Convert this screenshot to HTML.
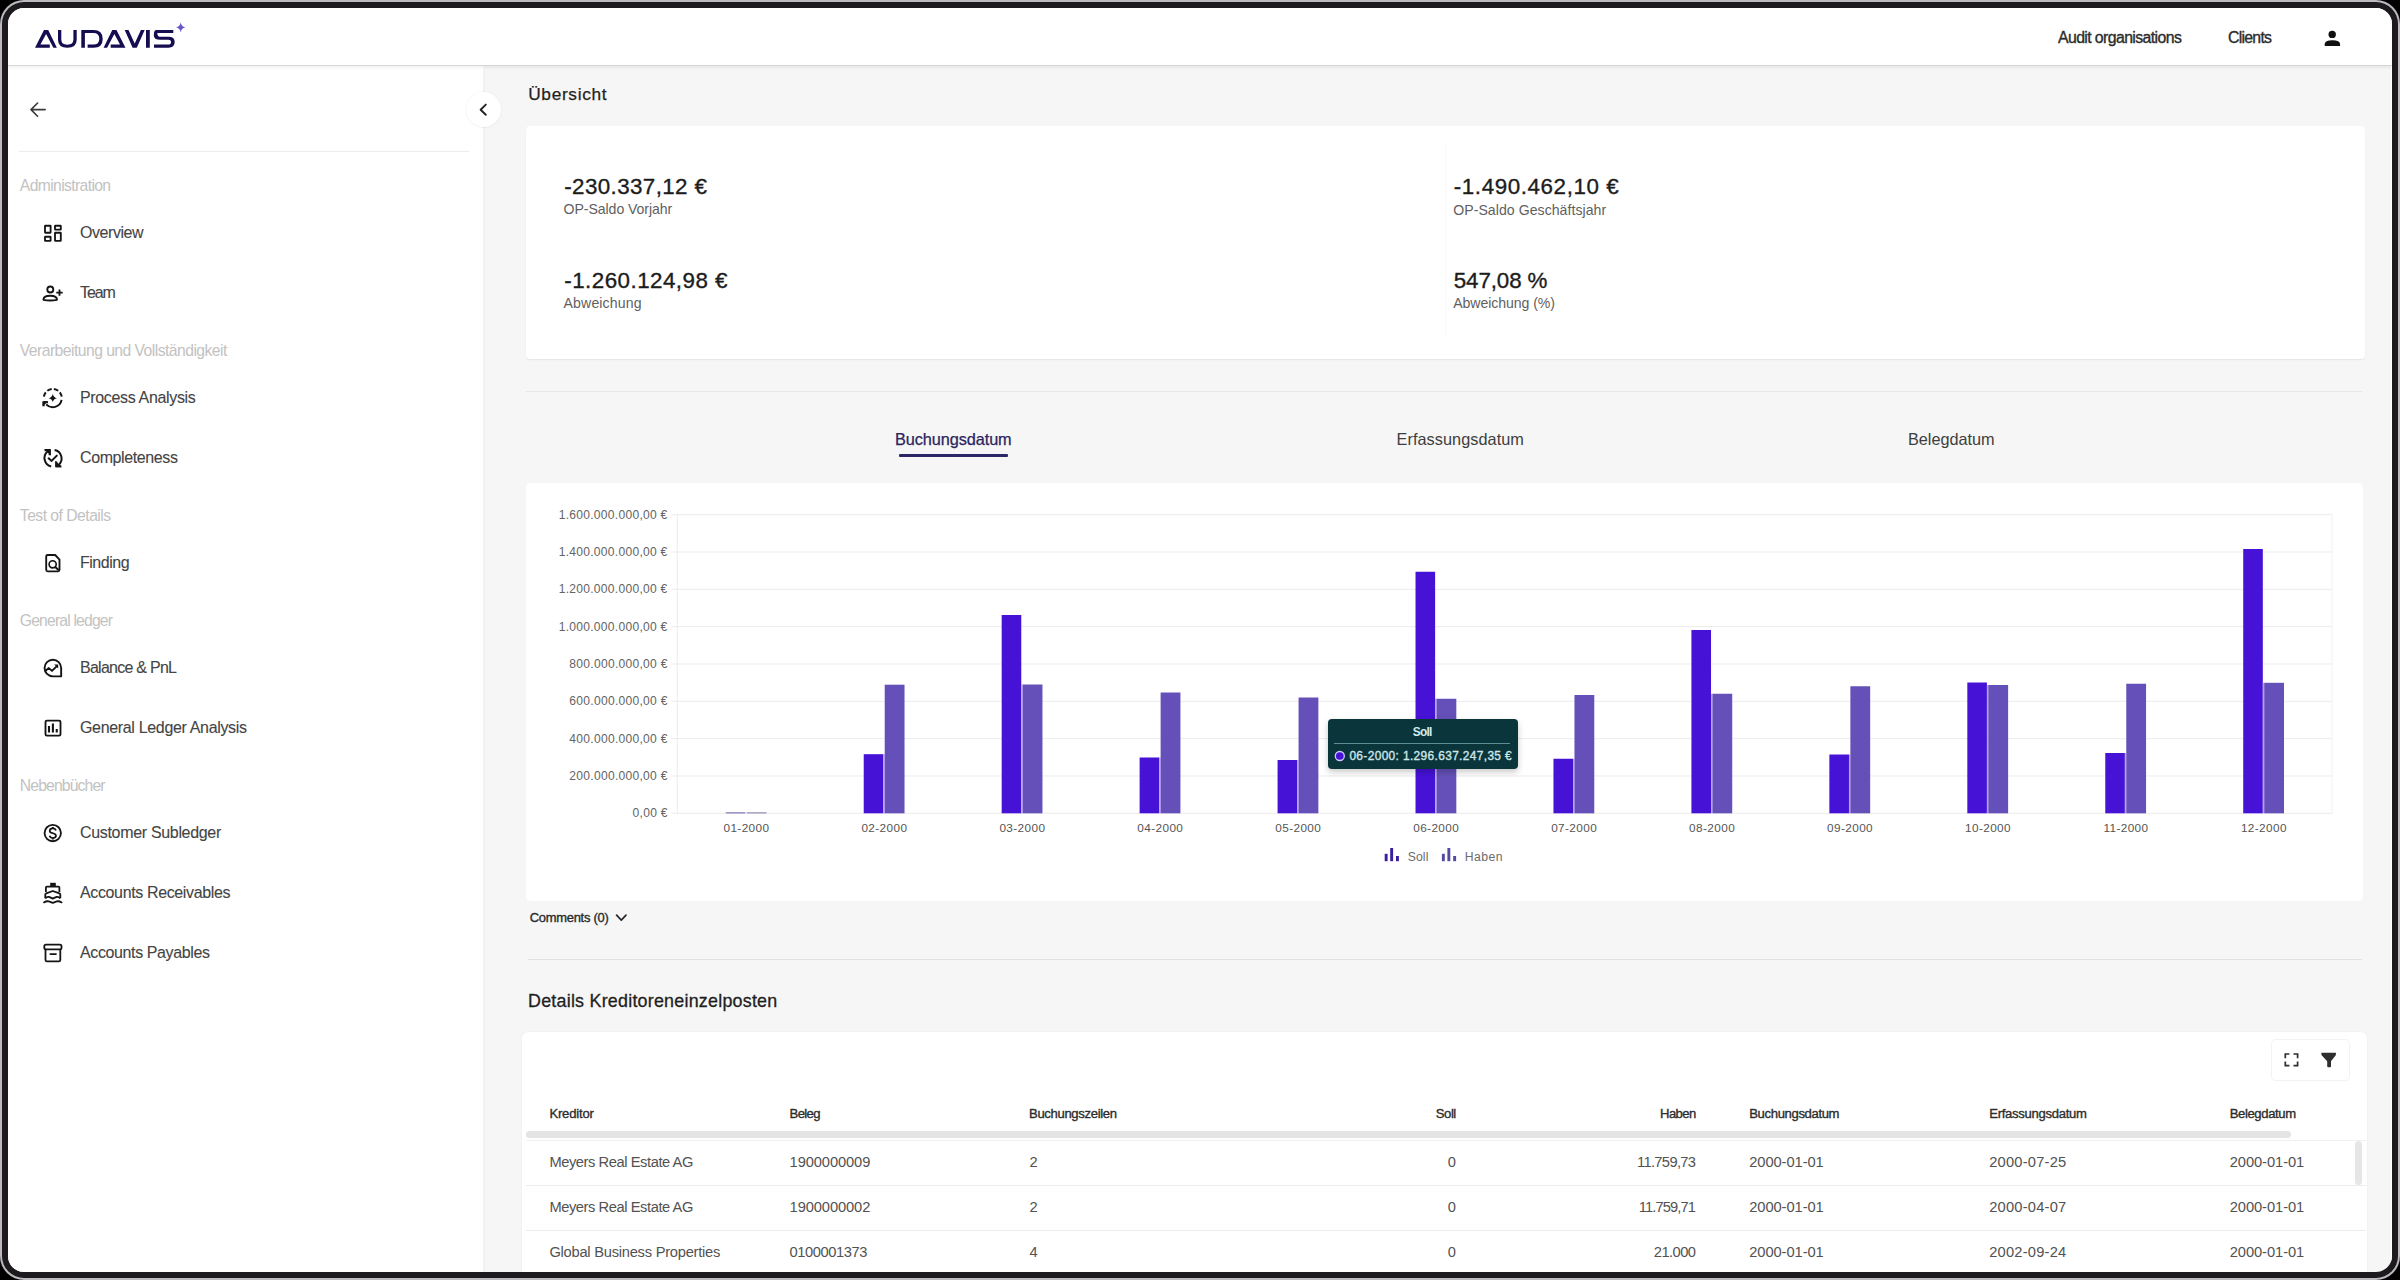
<!DOCTYPE html>
<html><head><meta charset="utf-8"><title>Audavis</title>
<style>
html,body{margin:0;padding:0;width:2400px;height:1280px;overflow:hidden;background:#000}
body{position:relative;font-family:"Liberation Sans",sans-serif}
.r{position:absolute}
.t{position:absolute;white-space:nowrap}
svg.r{overflow:visible}
</style></head><body>
<div class="r" style="left:0;top:0;width:2400px;height:1280px;border-radius:24px;background:#bcb8bc"></div>
<div class="r" style="left:2px;top:2px;width:2396px;height:1276px;border-radius:22px;background:#1c1a1e"></div>
<div class="r" style="left:8px;top:8px;width:2384px;height:1264px;border-radius:16px;background:#f6f6f6;overflow:hidden">
<div class="r" style="left:-8px;top:-8px;width:2400px;height:1280px">
<div class="r" style="left:0px;top:0px;width:2400px;height:64.5px;background:#fff"></div>
<div class="r" style="left:0px;top:64.5px;width:2400px;height:1.5px;background:#d6d6d6"></div>
<div class="r" style="left:0px;top:66px;width:2400px;height:4px;background:linear-gradient(rgba(0,0,0,0.06),rgba(0,0,0,0))"></div>
<div class="r" style="left:2391px;top:66px;width:1px;height:1214px;background:#fff"></div>
<svg class="r" style="left:0;top:0" width="200" height="60" viewBox="0 0 200 60">
<g fill="#140d4f">
<path d="M35.00 47.70 L44.00 30.00 L48.20 30.00 L56.87 47.70 L53.37 47.70 L46.10 33.90 L40.44 44.40 L49.80 44.40 L49.80 47.70 Z"/>
<path d="M58 30 H61.3 V39.5 Q61.3 44.7 67.3 44.7 Q73.4 44.7 73.4 39.5 V30 H76.7 V39.8 Q76.7 47.8 67.3 47.8 Q58 47.8 58 39.8 Z"/>
<path d="M81.3 30 H93.5 Q102.7 30 102.7 38.9 Q102.7 47.7 93.5 47.7 H87.6 V44.6 H93.3 Q99.3 44.6 99.3 38.9 Q99.3 33.1 93.3 33.1 H84.9 V47.7 H81.3 Z"/>
<path d="M125.47 47.70 L116.47 30.00 L112.27 30.00 L103.60 47.70 L107.10 47.70 L114.37 33.90 L120.03 44.40 L110.67 44.40 L110.67 47.70 Z"/>
<path d="M124.7 30 H128.5 L134.7 43.4 L140.9 30 H144.7 L136.8 47.7 H132.6 Z"/>
<path d="M146 30 H149.8 V47.7 H146 Z"/>
<path d="M156.5 30 H173.3 V33.1 H157.3 Q157.3 36.7 160 36.7 H168.5 Q174.7 36.7 174.7 42.1 Q174.7 47.7 168.5 47.7 H154 V44.6 H168.3 Q171 44.6 171 42.2 Q171 39.8 168.3 39.8 H160 Q153.8 39.8 153.8 35.2 Q153.8 30 156.5 30 Z"/>
</g>
<path fill="#6657c8" d="M180.7 22.2 Q181.3 26.7 185.3 27.4 Q181.3 28.1 180.7 32.4 Q180.1 28.1 176.1 27.4 Q180.1 26.7 180.7 22.2 Z"/>
</svg>
<div class="t" style="left:2058.00px;top:30.00px;font-size:15.84px;line-height:15.84px;color:#2b2b2b;font-weight:400;letter-spacing:-0.600px;-webkit-text-stroke:0.35px #2b2b2b;">Audit organisations</div>
<div class="t" style="left:2228.00px;top:30.00px;font-size:15.84px;line-height:15.84px;color:#2b2b2b;font-weight:400;letter-spacing:-0.733px;-webkit-text-stroke:0.35px #2b2b2b;">Clients</div>
<svg class="r" style="left:2316px;top:24px" width="32" height="28" viewBox="2316 24 32 28">
<circle cx="2332.2" cy="34.4" r="3.7" fill="#111"/>
<path d="M2324.7 45.9 V44 Q2324.7 40.2 2332.4 40.2 Q2340.1 40.2 2340.1 44 V45.9 Z" fill="#111"/>
</svg>
<div class="r" style="left:0px;top:66px;width:483px;height:1214px;background:#fff"></div>
<div class="r" style="left:482.5px;top:70px;width:2.5px;height:1210px;background:#f1f1f1"></div>
<div class="r" style="left:0px;top:66px;width:483px;height:4px;background:linear-gradient(rgba(0,0,0,0.05),rgba(0,0,0,0))"></div>
<div class="r" style="left:19px;top:150.5px;width:450px;height:1px;background:#ececec"></div>
<svg class="r" style="left:0;top:0" width="520" height="1000" viewBox="0 0 520 1000">
<g fill="none" stroke="#3a3a3a" stroke-width="1.6" stroke-linecap="round" stroke-linejoin="round">
<path d="M45.2 109.6 H31.2 M37.6 103 L31 109.6 L37.6 116.2"/>
</g>
</svg>
<div class="r" style="left:465.5px;top:92px;width:35px;height:35px;border-radius:50%;background:#fff;box-shadow:0 0 0 1px rgba(0,0,0,0.025),0 1px 2px rgba(0,0,0,0.03)"></div>
<svg class="r" style="left:470px;top:96px" width="28" height="28" viewBox="470 96 28 28">
<path d="M485.8 104.6 L480.6 109.7 L485.8 114.8" fill="none" stroke="#222" stroke-width="1.9" stroke-linecap="round" stroke-linejoin="round"/>
</svg>
<div class="t" style="left:19.80px;top:178.00px;font-size:15.70px;line-height:15.70px;color:#c2c2c2;font-weight:400;letter-spacing:-0.623px;">Administration</div>
<div class="t" style="left:80.00px;top:225.00px;font-size:15.99px;line-height:15.99px;color:#454545;font-weight:400;letter-spacing:-0.429px;-webkit-text-stroke:0.1px #3a3a3a;">Overview</div>
<div class="t" style="left:80.00px;top:285.00px;font-size:15.99px;line-height:15.99px;color:#454545;font-weight:400;letter-spacing:-1.067px;-webkit-text-stroke:0.1px #3a3a3a;">Team</div>
<div class="t" style="left:19.80px;top:343.00px;font-size:15.70px;line-height:15.70px;color:#c2c2c2;font-weight:400;letter-spacing:-0.535px;">Verarbeitung und Vollständigkeit</div>
<div class="t" style="left:80.00px;top:390.00px;font-size:15.99px;line-height:15.99px;color:#454545;font-weight:400;letter-spacing:-0.337px;-webkit-text-stroke:0.1px #3a3a3a;">Process Analysis</div>
<div class="t" style="left:80.00px;top:450.00px;font-size:15.99px;line-height:15.99px;color:#454545;font-weight:400;letter-spacing:-0.382px;-webkit-text-stroke:0.1px #3a3a3a;">Completeness</div>
<div class="t" style="left:19.80px;top:508.00px;font-size:15.70px;line-height:15.70px;color:#c2c2c2;font-weight:400;letter-spacing:-0.511px;">Test of Details</div>
<div class="t" style="left:80.00px;top:555.00px;font-size:15.99px;line-height:15.99px;color:#454545;font-weight:400;letter-spacing:-0.483px;-webkit-text-stroke:0.1px #3a3a3a;">Finding</div>
<div class="t" style="left:19.80px;top:613.00px;font-size:15.70px;line-height:15.70px;color:#c2c2c2;font-weight:400;letter-spacing:-0.815px;">General ledger</div>
<div class="t" style="left:80.00px;top:660.00px;font-size:15.99px;line-height:15.99px;color:#454545;font-weight:400;letter-spacing:-0.733px;-webkit-text-stroke:0.1px #3a3a3a;">Balance &amp; PnL</div>
<div class="t" style="left:80.00px;top:720.00px;font-size:15.99px;line-height:15.99px;color:#454545;font-weight:400;letter-spacing:-0.327px;-webkit-text-stroke:0.1px #3a3a3a;">General Ledger Analysis</div>
<div class="t" style="left:19.80px;top:778.00px;font-size:15.70px;line-height:15.70px;color:#c2c2c2;font-weight:400;letter-spacing:-0.850px;">Nebenbücher</div>
<div class="t" style="left:80.00px;top:825.00px;font-size:15.99px;line-height:15.99px;color:#454545;font-weight:400;letter-spacing:-0.315px;-webkit-text-stroke:0.1px #3a3a3a;">Customer Subledger</div>
<div class="t" style="left:80.00px;top:885.00px;font-size:15.99px;line-height:15.99px;color:#454545;font-weight:400;letter-spacing:-0.358px;-webkit-text-stroke:0.1px #3a3a3a;">Accounts Receivables</div>
<div class="t" style="left:80.00px;top:945.00px;font-size:15.99px;line-height:15.99px;color:#454545;font-weight:400;letter-spacing:-0.375px;-webkit-text-stroke:0.1px #3a3a3a;">Accounts Payables</div>
<svg class="r" style="left:0;top:0" width="100" height="1000" viewBox="0 0 100 1000">
<g fill="none" stroke="#141414" stroke-width="1.85" stroke-linejoin="round">
<!-- overview -->
<rect x="45" y="225.7" width="5.6" height="7" rx="0.4"/>
<rect x="55" y="225.7" width="5.8" height="3.9" rx="0.4"/>
<rect x="45" y="236.7" width="5.6" height="4.1" rx="0.4"/>
<rect x="55" y="232.7" width="5.8" height="8.1" rx="0.4"/>
<!-- team -->
<circle cx="50.3" cy="289.5" r="3"/>
<path d="M43.4 299.8 Q43.4 295.7 50.2 295.7 Q57 295.7 57 299.8 Q50.2 301.1 43.4 299.8 Z"/>
<path d="M56.3 292.6 H62.7 M59.5 289.4 V295.8"/>
<!-- process analysis -->
<path d="M43.9 396.6 A9 9 0 0 1 61.7 396.6" stroke-width="2" stroke-dasharray="4.7 2.2"/>
<path d="M61.6 399.9 A9 9 0 0 1 46.2 404.4" stroke-width="2"/>
<path d="M48 402.2 H43.6 V406.3" stroke-width="2.1"/>
<!-- completeness -->
<path d="M51.2 466.4 A8.6 8.6 0 0 1 47.6 451.4" stroke-width="2"/>
<path d="M44.6 450.1 H49.7 V455.2" stroke-width="2.1"/>
<path d="M54.6 450 A8.6 8.6 0 0 1 58.5 465" stroke-width="2"/>
<path d="M61.3 466.2 H56.3 V461.5" stroke-width="2.1"/>
<path d="M48.6 458.3 L51.6 460.9 L56.8 455.6" stroke-width="2" stroke-linecap="round"/>
<!-- finding -->
<path d="M47.7 555 H55.2 L59.5 559.6 V569.8 Q59.5 571.3 58 571.3 H47.7 Q46.2 571.3 46.2 569.8 V556.5 Q46.2 555 47.7 555 Z"/>
<circle cx="52.65" cy="564.3" r="3.55" stroke-width="1.65"/>
<path d="M55.2 566.9 L58.6 570" stroke-width="2"/>
<!-- balance -->
<path d="M61.15 668.05 A8.3 8.3 0 1 0 52.85 676.35 H61.15 Z" stroke-width="1.9"/>
<path d="M45.6 670.8 L48.8 668.1 L52 670.9 L56.9 666.1" stroke-width="1.9"/>
<!-- GL analysis -->
<rect x="45.5" y="720.6" width="15" height="15.1" rx="1.4"/>
<path d="M49 726.1 V732.6 M52.9 723.5 V732.6 M56.75 729.1 V732.6" stroke-width="2.1"/>
<!-- customer subledger -->
<circle cx="52.75" cy="833.05" r="8.2" stroke-width="1.8"/>
<path d="M55.9 830.4 C55.5 829.1 54.3 828.4 52.8 828.4 C50.9 828.4 49.7 829.4 49.7 830.9 C49.7 832.6 51.4 832.9 52.8 833.2 C54.4 833.6 56 834.1 56 835.8 C56 837.3 54.6 838 52.8 838 C51.2 838 50 837.2 49.5 835.8" stroke-width="1.7"/>
<path d="M52.8 826.9 V828.5 M52.8 837.9 V839.6" stroke-width="2"/>
<!-- AR boat -->
<path d="M45.9 892 V887.6 Q45.9 886.6 46.9 886.6 H58.4 Q59.4 886.6 59.4 887.6 V892" stroke-width="1.8"/>
<path d="M45.3 898.2 V894.6 Q45.3 893.7 46.2 893.4 L52.8 891 L59.4 893.4 Q60.3 893.7 60.3 894.6 V898.2" stroke-width="1.8"/>
<path d="M45.3 898.3 Q47 896.4 48.8 896.9 Q50.8 897.6 52.8 898.6 Q54.8 897.6 56.8 896.9 Q58.6 896.4 60.3 898.3" stroke-width="1.8"/>
<path d="M44 902.4 Q46.4 900.9 48.8 901.4 Q50.8 902.1 52.8 902.8 Q54.8 902.1 56.8 901.4 Q59.2 900.9 61.6 902.4" stroke-width="1.8" stroke-linecap="round"/>
<!-- AP archive -->
<rect x="44.3" y="944.7" width="17.2" height="4.6" rx="1.6" stroke-width="1.8"/>
<path d="M45.5 949.3 V959.9 Q45.5 961.4 47 961.4 H58.8 Q60.3 961.4 60.3 959.9 V949.3" stroke-width="1.8"/>
<path d="M50.4 954.1 H55.9" stroke-width="1.9" stroke-linecap="round"/>
</g>
<g fill="#141414">
<path d="M52.76 394 Q53.5 397.5 56.9 398.2 Q53.5 398.9 52.76 402 Q52 398.9 48.6 398.2 Q52 397.5 52.76 394 Z"/>
<path d="M42.6 401.2 H48 L42.6 406.6 Z"/>
<path d="M44.2 449.1 H50.7 V455.6 Z"/>
<path d="M61.8 467.2 H55.3 V460.7 Z"/>
<path d="M54.2 664.5 H58.2 V668.5 Z"/>
<path d="M50.2 882.8 H55.8 V886.2 H50.2 Z"/>
</g>
</svg>
<div class="t" style="left:528.20px;top:86.00px;font-size:17.30px;line-height:17.30px;color:#1f1f1f;font-weight:400;letter-spacing:0.675px;-webkit-text-stroke:0.25px #1f1f1f;">Übersicht</div>
<div class="r" style="left:525.5px;top:126px;width:1839px;height:232.5px;background:#fff;border-radius:4px;box-shadow:0 1px 1.5px rgba(0,0,0,0.07)"></div>
<div class="r" style="left:1445px;top:145px;width:1px;height:190px;background:#f8f8f8"></div>
<div class="t" style="left:564.30px;top:176.00px;font-size:22.38px;line-height:22.38px;color:#1c1c1c;font-weight:400;letter-spacing:0.375px;-webkit-text-stroke:0.35px #1c1c1c;">-230.337,12 €</div>
<div class="t" style="left:563.60px;top:202.00px;font-size:14.10px;line-height:14.10px;color:#5f5f5f;font-weight:400;letter-spacing:-0.067px;">OP-Saldo Vorjahr</div>
<div class="t" style="left:564.30px;top:270.00px;font-size:22.38px;line-height:22.38px;color:#1c1c1c;font-weight:400;letter-spacing:0.457px;-webkit-text-stroke:0.35px #1c1c1c;">-1.260.124,98 €</div>
<div class="t" style="left:563.60px;top:296.00px;font-size:14.10px;line-height:14.10px;color:#5f5f5f;font-weight:400;letter-spacing:0.122px;">Abweichung</div>
<div class="t" style="left:1453.80px;top:176.00px;font-size:22.38px;line-height:22.38px;color:#1c1c1c;font-weight:400;letter-spacing:0.586px;-webkit-text-stroke:0.35px #1c1c1c;">-1.490.462,10 €</div>
<div class="t" style="left:1453.20px;top:203.00px;font-size:14.10px;line-height:14.10px;color:#5f5f5f;font-weight:400;letter-spacing:0.048px;">OP-Saldo Geschäftsjahr</div>
<div class="t" style="left:1453.80px;top:270.00px;font-size:22.38px;line-height:22.38px;color:#1c1c1c;font-weight:400;letter-spacing:-0.129px;-webkit-text-stroke:0.35px #1c1c1c;">547,08 %</div>
<div class="t" style="left:1453.20px;top:296.00px;font-size:14.10px;line-height:14.10px;color:#5f5f5f;font-weight:400;letter-spacing:-0.069px;">Abweichung (%)</div>
<div class="r" style="left:526px;top:390.5px;width:1836px;height:1.2px;background:#e6e6e6"></div>
<div class="t" style="left:895.00px;top:431.00px;font-size:16.28px;line-height:16.28px;color:#2a2560;font-weight:400;letter-spacing:-0.075px;-webkit-text-stroke:0.25px #2a2560;">Buchungsdatum</div>
<div class="r" style="left:899px;top:454px;width:109px;height:2.8px;background:#2c2766;border-radius:1px"></div>
<div class="t" style="left:1396.50px;top:431.00px;font-size:16.28px;line-height:16.28px;color:#3e3e3e;font-weight:400;letter-spacing:0.057px;">Erfassungsdatum</div>
<div class="t" style="left:1908.00px;top:431.00px;font-size:16.28px;line-height:16.28px;color:#3e3e3e;font-weight:400;letter-spacing:-0.022px;">Belegdatum</div>
<div class="r" style="left:526px;top:483px;width:1836.5px;height:418px;background:#fff;border-radius:5px"></div>
<svg class="r" style="left:0;top:0" width="2400" height="1280" viewBox="0 0 2400 1280">
<rect x="671.5" y="812.80" width="1660.80" height="1" fill="#ececec"/>
<rect x="671.5" y="775.47" width="1660.80" height="1" fill="#ececec"/>
<rect x="671.5" y="738.14" width="1660.80" height="1" fill="#ececec"/>
<rect x="671.5" y="700.81" width="1660.80" height="1" fill="#ececec"/>
<rect x="671.5" y="663.48" width="1660.80" height="1" fill="#ececec"/>
<rect x="671.5" y="626.15" width="1660.80" height="1" fill="#ececec"/>
<rect x="671.5" y="588.82" width="1660.80" height="1" fill="#ececec"/>
<rect x="671.5" y="551.49" width="1660.80" height="1" fill="#ececec"/>
<rect x="671.5" y="514.16" width="1660.80" height="1" fill="#ececec"/>
<rect x="676.8" y="514.2" width="1" height="299.6" fill="#ececec"/>
<rect x="2331.5" y="514.2" width="1" height="299.6" fill="#f1f1f1"/>
<rect x="725.77" y="812.2" width="19.6" height="1.3" fill="#8a80c0"/>
<rect x="746.77" y="812.2" width="19.8" height="1.3" fill="#9a94b8"/>
<rect x="863.72" y="754.20" width="19.6" height="59.10" fill="#4612d6"/>
<rect x="883.32" y="754.20" width="1.4" height="59.10" fill="#b49cfa"/>
<rect x="884.72" y="684.70" width="19.8" height="128.60" fill="#6450b8"/>
<rect x="1001.67" y="615.00" width="19.6" height="198.30" fill="#4612d6"/>
<rect x="1021.27" y="684.50" width="1.4" height="128.80" fill="#b49cfa"/>
<rect x="1022.67" y="684.50" width="19.8" height="128.80" fill="#6450b8"/>
<rect x="1139.62" y="757.50" width="19.6" height="55.80" fill="#4612d6"/>
<rect x="1159.22" y="757.50" width="1.4" height="55.80" fill="#b49cfa"/>
<rect x="1160.62" y="692.50" width="19.8" height="120.80" fill="#6450b8"/>
<rect x="1277.57" y="760.00" width="19.6" height="53.30" fill="#4612d6"/>
<rect x="1297.17" y="760.00" width="1.4" height="53.30" fill="#b49cfa"/>
<rect x="1298.57" y="697.50" width="19.8" height="115.80" fill="#6450b8"/>
<rect x="1415.52" y="571.75" width="19.6" height="241.55" fill="#4612d6"/>
<rect x="1435.12" y="698.75" width="1.4" height="114.55" fill="#b49cfa"/>
<rect x="1436.52" y="698.75" width="19.8" height="114.55" fill="#6450b8"/>
<rect x="1553.47" y="758.75" width="19.6" height="54.55" fill="#4612d6"/>
<rect x="1573.07" y="758.75" width="1.4" height="54.55" fill="#b49cfa"/>
<rect x="1574.47" y="695.00" width="19.8" height="118.30" fill="#6450b8"/>
<rect x="1691.42" y="630.00" width="19.6" height="183.30" fill="#4612d6"/>
<rect x="1711.02" y="693.75" width="1.4" height="119.55" fill="#b49cfa"/>
<rect x="1712.42" y="693.75" width="19.8" height="119.55" fill="#6450b8"/>
<rect x="1829.37" y="754.50" width="19.6" height="58.80" fill="#4612d6"/>
<rect x="1848.97" y="754.50" width="1.4" height="58.80" fill="#b49cfa"/>
<rect x="1850.37" y="686.25" width="19.8" height="127.05" fill="#6450b8"/>
<rect x="1967.32" y="682.50" width="19.6" height="130.80" fill="#4612d6"/>
<rect x="1986.92" y="685.00" width="1.4" height="128.30" fill="#b49cfa"/>
<rect x="1988.32" y="685.00" width="19.8" height="128.30" fill="#6450b8"/>
<rect x="2105.27" y="753.00" width="19.6" height="60.30" fill="#4612d6"/>
<rect x="2124.87" y="753.00" width="1.4" height="60.30" fill="#b49cfa"/>
<rect x="2126.27" y="683.75" width="19.8" height="129.55" fill="#6450b8"/>
<rect x="2243.22" y="549.00" width="19.6" height="264.30" fill="#4612d6"/>
<rect x="2262.82" y="682.80" width="1.4" height="130.50" fill="#b49cfa"/>
<rect x="2264.22" y="682.80" width="19.8" height="130.50" fill="#6450b8"/>
<rect x="1384.70" y="853.8" width="2.9" height="7.4" fill="#3a1fa0"/>
<rect x="1390.20" y="848" width="2.9" height="13.2" fill="#3a1fa0"/>
<rect x="1396.00" y="856" width="2.9" height="5.2" fill="#3a1fa0"/>
<rect x="1441.90" y="853.8" width="2.9" height="7.4" fill="#544a9e"/>
<rect x="1447.40" y="848" width="2.9" height="13.2" fill="#544a9e"/>
<rect x="1453.20" y="856" width="2.9" height="5.2" fill="#544a9e"/>
</svg>
<div class="t" style="left:632.59px;top:807.00px;font-size:12.06px;line-height:12.06px;color:#646464;font-weight:400;letter-spacing:0.282px;">0,00 €</div>
<div class="t" style="left:569.36px;top:770.00px;font-size:12.06px;line-height:12.06px;color:#646464;font-weight:400;letter-spacing:0.282px;">200.000.000,00 €</div>
<div class="t" style="left:569.36px;top:733.00px;font-size:12.06px;line-height:12.06px;color:#646464;font-weight:400;letter-spacing:0.282px;">400.000.000,00 €</div>
<div class="t" style="left:569.36px;top:695.00px;font-size:12.06px;line-height:12.06px;color:#646464;font-weight:400;letter-spacing:0.282px;">600.000.000,00 €</div>
<div class="t" style="left:569.36px;top:658.00px;font-size:12.06px;line-height:12.06px;color:#646464;font-weight:400;letter-spacing:0.282px;">800.000.000,00 €</div>
<div class="t" style="left:558.70px;top:621.00px;font-size:12.06px;line-height:12.06px;color:#646464;font-weight:400;letter-spacing:0.282px;">1.000.000.000,00 €</div>
<div class="t" style="left:558.70px;top:583.00px;font-size:12.06px;line-height:12.06px;color:#646464;font-weight:400;letter-spacing:0.282px;">1.200.000.000,00 €</div>
<div class="t" style="left:558.70px;top:546.00px;font-size:12.06px;line-height:12.06px;color:#646464;font-weight:400;letter-spacing:0.282px;">1.400.000.000,00 €</div>
<div class="t" style="left:558.70px;top:509.00px;font-size:12.06px;line-height:12.06px;color:#646464;font-weight:400;letter-spacing:0.282px;">1.600.000.000,00 €</div>
<div class="t" style="left:723.48px;top:822.00px;font-size:11.77px;line-height:11.77px;color:#555;font-weight:400;letter-spacing:0.400px;">01-2000</div>
<div class="t" style="left:861.42px;top:822.00px;font-size:11.77px;line-height:11.77px;color:#555;font-weight:400;letter-spacing:0.400px;">02-2000</div>
<div class="t" style="left:999.38px;top:822.00px;font-size:11.77px;line-height:11.77px;color:#555;font-weight:400;letter-spacing:0.400px;">03-2000</div>
<div class="t" style="left:1137.33px;top:822.00px;font-size:11.77px;line-height:11.77px;color:#555;font-weight:400;letter-spacing:0.400px;">04-2000</div>
<div class="t" style="left:1275.27px;top:822.00px;font-size:11.77px;line-height:11.77px;color:#555;font-weight:400;letter-spacing:0.400px;">05-2000</div>
<div class="t" style="left:1413.22px;top:822.00px;font-size:11.77px;line-height:11.77px;color:#555;font-weight:400;letter-spacing:0.400px;">06-2000</div>
<div class="t" style="left:1551.17px;top:822.00px;font-size:11.77px;line-height:11.77px;color:#555;font-weight:400;letter-spacing:0.400px;">07-2000</div>
<div class="t" style="left:1689.12px;top:822.00px;font-size:11.77px;line-height:11.77px;color:#555;font-weight:400;letter-spacing:0.400px;">08-2000</div>
<div class="t" style="left:1827.07px;top:822.00px;font-size:11.77px;line-height:11.77px;color:#555;font-weight:400;letter-spacing:0.400px;">09-2000</div>
<div class="t" style="left:1965.02px;top:822.00px;font-size:11.77px;line-height:11.77px;color:#555;font-weight:400;letter-spacing:0.400px;">10-2000</div>
<div class="t" style="left:2103.42px;top:822.00px;font-size:11.77px;line-height:11.77px;color:#555;font-weight:400;letter-spacing:0.400px;">11-2000</div>
<div class="t" style="left:2240.92px;top:822.00px;font-size:11.77px;line-height:11.77px;color:#555;font-weight:400;letter-spacing:0.400px;">12-2000</div>
<div class="t" style="left:1407.80px;top:851.00px;font-size:12.21px;line-height:12.21px;color:#6b6b6b;font-weight:400;letter-spacing:0.067px;">Soll</div>
<div class="t" style="left:1464.70px;top:851.00px;font-size:12.21px;line-height:12.21px;color:#6b6b6b;font-weight:400;letter-spacing:0.450px;">Haben</div>
<div class="r" style="left:1327.9px;top:718.6px;width:189.9px;height:50.2px;border-radius:4px;background:#0a353b;box-shadow:0 3px 6px rgba(0,0,0,0.22)"></div>
<div class="r" style="left:1334.3px;top:743px;width:176.2px;height:1px;background:#5b8d92"></div>
<svg class="r" style="left:1330px;top:746px" width="20" height="20" viewBox="1330 746 20 20"><circle cx="1339.8" cy="756" r="4.5" fill="#4612d6" stroke="#d2c8ff" stroke-width="1.3"/></svg>
<div class="t" style="left:1412.75px;top:727.00px;font-size:11.92px;line-height:11.92px;color:#d3ecee;font-weight:700;letter-spacing:-0.717px;">Soll</div>
<div class="t" style="left:1349.40px;top:751.00px;font-size:11.92px;line-height:11.92px;color:#cfe6e8;font-weight:400;letter-spacing:0.358px;-webkit-text-stroke:0.35px #cfe6e8;">06-2000: 1.296.637.247,35 €</div>
<div class="t" style="left:529.70px;top:912.00px;font-size:12.94px;line-height:12.94px;color:#2a2a2a;font-weight:400;letter-spacing:-0.264px;-webkit-text-stroke:0.35px #2a2a2a;">Comments (0)</div>
<svg class="r" style="left:610px;top:908px" width="22" height="20" viewBox="610 908 22 20"><path d="M616.6 915.2 L621.3 920.2 L626 915.2" fill="none" stroke="#2a2a2a" stroke-width="1.7" stroke-linecap="round" stroke-linejoin="round"/></svg>
<div class="r" style="left:528px;top:958.7px;width:1834px;height:1.2px;background:#e2e2e2"></div>
<div class="t" style="left:528.00px;top:993.00px;font-size:17.88px;line-height:17.88px;color:#1f1f1f;font-weight:400;letter-spacing:0.241px;-webkit-text-stroke:0.3px #1f1f1f;">Details Kreditoreneinzelposten</div>
<div class="r" style="left:522px;top:1031.5px;width:1845px;height:300px;background:#fff;border-radius:6px;box-shadow:0 0 2px rgba(0,0,0,0.07)"></div>
<div class="r" style="left:2272.1px;top:1040.1px;width:77.3px;height:39.6px;border-radius:4px;background:#fff;box-shadow:0 0 0 1px #f3f3f3,0 1px 2px rgba(0,0,0,0.04)"></div>
<svg class="r" style="left:2270px;top:1040px" width="80" height="40" viewBox="2270 1040 80 40">
<path d="M2285.3 1058.2 V1054 H2289.4 M2293.5 1054 H2297.6 V1058.2 M2297.6 1061.4 V1065.6 H2293.5 M2289.4 1065.6 H2285.3 V1061.4" fill="none" stroke="#2e2e2e" stroke-width="1.7"/>
<path d="M2321.4 1052.7 H2335.9 V1055 L2331 1061.2 V1066.2 Q2331 1067.2 2330 1067.2 H2328.2 Q2327.2 1067.2 2327.2 1066.2 V1061.2 L2321.4 1055 Z" fill="#2e2e2e"/>
</svg>
<div class="t" style="left:549.40px;top:1107.00px;font-size:13.08px;line-height:13.08px;color:#2c2c2c;font-weight:400;letter-spacing:-0.186px;-webkit-text-stroke:0.35px #2c2c2c;">Kreditor</div>
<div class="t" style="left:789.60px;top:1107.00px;font-size:13.08px;line-height:13.08px;color:#2c2c2c;font-weight:400;letter-spacing:-0.650px;-webkit-text-stroke:0.35px #2c2c2c;">Beleg</div>
<div class="t" style="left:1029.00px;top:1107.00px;font-size:13.08px;line-height:13.08px;color:#2c2c2c;font-weight:400;letter-spacing:-0.331px;-webkit-text-stroke:0.35px #2c2c2c;">Buchungszeilen</div>
<div class="t" style="left:1435.80px;top:1107.00px;font-size:13.08px;line-height:13.08px;color:#2c2c2c;font-weight:400;letter-spacing:-0.450px;-webkit-text-stroke:0.35px #2c2c2c;">Soll</div>
<div class="t" style="left:1660.00px;top:1107.00px;font-size:13.08px;line-height:13.08px;color:#2c2c2c;font-weight:400;letter-spacing:-0.562px;-webkit-text-stroke:0.35px #2c2c2c;">Haben</div>
<div class="t" style="left:1749.25px;top:1107.00px;font-size:13.08px;line-height:13.08px;color:#2c2c2c;font-weight:400;letter-spacing:-0.354px;-webkit-text-stroke:0.35px #2c2c2c;">Buchungsdatum</div>
<div class="t" style="left:1989.25px;top:1107.00px;font-size:13.08px;line-height:13.08px;color:#2c2c2c;font-weight:400;letter-spacing:-0.289px;-webkit-text-stroke:0.35px #2c2c2c;">Erfassungsdatum</div>
<div class="t" style="left:2229.70px;top:1107.00px;font-size:13.08px;line-height:13.08px;color:#2c2c2c;font-weight:400;letter-spacing:-0.378px;-webkit-text-stroke:0.35px #2c2c2c;">Belegdatum</div>
<div class="r" style="left:526.4px;top:1131px;width:1764.2px;height:6.5px;background:#e4e4e4;border-radius:3.5px"></div>
<div class="r" style="left:526px;top:1140px;width:1840px;height:1px;background:#f1f1f1"></div>
<div class="r" style="left:526px;top:1185.1px;width:1840px;height:1px;background:#ececec"></div>
<div class="r" style="left:526px;top:1230.3px;width:1840px;height:1px;background:#ececec"></div>
<div class="r" style="left:2354.7px;top:1141px;width:7.1px;height:43.6px;background:#e6e6e6;border-radius:3.5px"></div>
<div class="t" style="left:549.40px;top:1155.00px;font-size:14.68px;line-height:14.68px;color:#525252;font-weight:400;letter-spacing:-0.425px;">Meyers Real Estate AG</div>
<div class="t" style="left:789.60px;top:1155.00px;font-size:14.68px;line-height:14.68px;color:#525252;font-weight:400;letter-spacing:-0.100px;">1900000009</div>
<div class="t" style="left:1029.50px;top:1155.00px;font-size:14.68px;line-height:14.68px;color:#525252;font-weight:400;letter-spacing:0.000px;">2</div>
<div class="t" style="left:1447.80px;top:1155.00px;font-size:14.68px;line-height:14.68px;color:#525252;font-weight:400;letter-spacing:0.000px;">0</div>
<div class="t" style="left:1637.00px;top:1155.00px;font-size:14.68px;line-height:14.68px;color:#525252;font-weight:400;letter-spacing:-0.650px;">11.759,73</div>
<div class="t" style="left:1749.25px;top:1155.00px;font-size:14.68px;line-height:14.68px;color:#525252;font-weight:400;letter-spacing:-0.067px;">2000-01-01</div>
<div class="t" style="left:1989.25px;top:1155.00px;font-size:14.68px;line-height:14.68px;color:#525252;font-weight:400;letter-spacing:0.211px;">2000-07-25</div>
<div class="t" style="left:2229.70px;top:1155.00px;font-size:14.68px;line-height:14.68px;color:#525252;font-weight:400;letter-spacing:-0.056px;">2000-01-01</div>
<div class="t" style="left:549.40px;top:1200.00px;font-size:14.68px;line-height:14.68px;color:#525252;font-weight:400;letter-spacing:-0.425px;">Meyers Real Estate AG</div>
<div class="t" style="left:789.60px;top:1200.00px;font-size:14.68px;line-height:14.68px;color:#525252;font-weight:400;letter-spacing:-0.100px;">1900000002</div>
<div class="t" style="left:1029.50px;top:1200.00px;font-size:14.68px;line-height:14.68px;color:#525252;font-weight:400;letter-spacing:0.000px;">2</div>
<div class="t" style="left:1447.80px;top:1200.00px;font-size:14.68px;line-height:14.68px;color:#525252;font-weight:400;letter-spacing:0.000px;">0</div>
<div class="t" style="left:1638.75px;top:1200.00px;font-size:14.68px;line-height:14.68px;color:#525252;font-weight:400;letter-spacing:-0.869px;">11.759,71</div>
<div class="t" style="left:1749.25px;top:1200.00px;font-size:14.68px;line-height:14.68px;color:#525252;font-weight:400;letter-spacing:-0.067px;">2000-01-01</div>
<div class="t" style="left:1989.25px;top:1200.00px;font-size:14.68px;line-height:14.68px;color:#525252;font-weight:400;letter-spacing:0.211px;">2000-04-07</div>
<div class="t" style="left:2229.70px;top:1200.00px;font-size:14.68px;line-height:14.68px;color:#525252;font-weight:400;letter-spacing:-0.056px;">2000-01-01</div>
<div class="t" style="left:549.40px;top:1245.00px;font-size:14.68px;line-height:14.68px;color:#525252;font-weight:400;letter-spacing:-0.240px;">Global Business Properties</div>
<div class="t" style="left:789.60px;top:1245.00px;font-size:14.68px;line-height:14.68px;color:#525252;font-weight:400;letter-spacing:-0.411px;">0100001373</div>
<div class="t" style="left:1029.50px;top:1245.00px;font-size:14.68px;line-height:14.68px;color:#525252;font-weight:400;letter-spacing:0.000px;">4</div>
<div class="t" style="left:1447.80px;top:1245.00px;font-size:14.68px;line-height:14.68px;color:#525252;font-weight:400;letter-spacing:0.000px;">0</div>
<div class="t" style="left:1653.75px;top:1245.00px;font-size:14.68px;line-height:14.68px;color:#525252;font-weight:400;letter-spacing:-0.530px;">21.000</div>
<div class="t" style="left:1749.25px;top:1245.00px;font-size:14.68px;line-height:14.68px;color:#525252;font-weight:400;letter-spacing:-0.067px;">2000-01-01</div>
<div class="t" style="left:1989.25px;top:1245.00px;font-size:14.68px;line-height:14.68px;color:#525252;font-weight:400;letter-spacing:0.211px;">2002-09-24</div>
<div class="t" style="left:2229.70px;top:1245.00px;font-size:14.68px;line-height:14.68px;color:#525252;font-weight:400;letter-spacing:-0.056px;">2000-01-01</div>
</div></div>
</body></html>
